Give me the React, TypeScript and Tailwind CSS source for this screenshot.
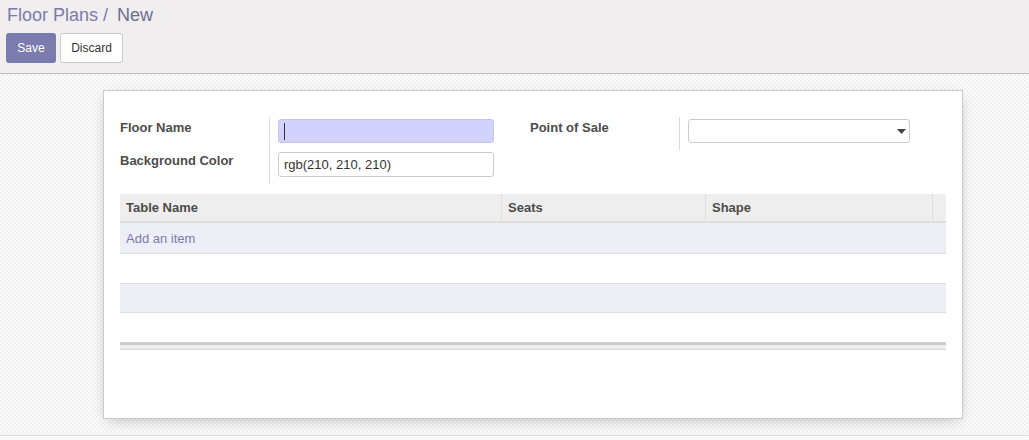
import React from 'react';

const font = { fontFamily: '"Liberation Sans", Arial, sans-serif' };

function FieldRow({ label, children, first }: { label: string; children: React.ReactNode; first?: boolean }) {
    return (
        <div className={`flex ${first ? 'h-[33px]' : 'h-[34px]'}`}>
            <div className="w-[149px] shrink-0 pt-[1px] text-[13px] font-bold text-[#4c4c4c]">{label}</div>
            <div className="flex-1 border-l border-[#dcdcdc] pl-[8px] pt-[2px]">{children}</div>
        </div>
    );
}

export default function App() {
    return (
        <div className="w-[1029px] h-[440px] flex flex-col bg-white overflow-hidden" style={font}>
            {/* control panel */}
            <div className="h-[74px] shrink-0 bg-[#f0eeee] border-b border-[#bcbcbc] px-[7px] pt-[4px]">
                <div className="text-[18px] leading-[22px] text-[#7c7bad]">
                    Floor Plans <span>/</span>
                    <span className="ml-[9px] text-[#6d6f8f]">New</span>
                </div>
                <div className="flex gap-[4px] mt-[7px] -ml-px">
                    <button className="h-[30px] w-[50px] rounded-[3px] bg-[#7c7bad] text-white text-[12px]">Save</button>
                    <button className="h-[30px] w-[63px] rounded-[3px] bg-white border border-[#cccccc] text-[#333] text-[12px]">Discard</button>
                </div>
            </div>

            {/* sheet background */}
            <div className="h-[362px] shrink-0 bg-[#f8f8f8] bg-[image:repeating-conic-gradient(#f1f1f1_0_25%,#fcfcfc_0_50%)] bg-[length:4px_4px] pt-[16px] border-b border-[#dddddd]">
                <div className="ml-[103px] w-[860px] h-[329px] bg-white border border-[#c9c9d2] shadow-[0_4px_14px_-4px_rgba(0,0,0,0.25)] px-[16px] pt-[26px]">
                    <div className="flex">
                        <div className="w-[410px]">
                            <FieldRow label="Floor Name" first>
                                <div className="h-[24px] w-[216px] rounded-[3px] bg-[#d2d2ff] border border-[#c6c6e8] flex items-center pl-[5px]">
                                    <span className="w-px h-[17px] bg-[#333]" />
                                </div>
                            </FieldRow>
                            <FieldRow label="Background Color">
                                <div className="h-[25px] w-[216px] rounded-[3px] bg-white border border-[#cccccc] flex items-center pl-[5px] text-[13px] text-[#333]">
                                    rgb(210, 210, 210)
                                </div>
                            </FieldRow>
                        </div>
                        <div className="w-[416px]">
                            <FieldRow label="Point of Sale" first>
                                <div className="h-[24px] w-[222px] rounded-[3px] bg-white border border-[#cccccc] flex items-center justify-end pr-[3px]">
                                    <svg width="9" height="5" viewBox="0 0 9 5"><path d="M0 0h9L4.5 5z" fill="#444" /></svg>
                                </div>
                            </FieldRow>
                        </div>
                    </div>

                    {/* one2many list */}
                    <div className="mt-[10px] text-[13px]">
                        <div className="flex h-[29px] bg-[#eeeeee] border-b-2 border-[#dddddd] font-bold text-[#4c4c4c]">
                            <div className="w-[381px] pl-[6px] pt-[1px] flex items-center">Table Name</div>
                            <div className="w-[204px] pl-[6px] pt-[1px] flex items-center border-l border-[#dedede]">Seats</div>
                            <div className="w-[227px] pl-[6px] pt-[1px] flex items-center border-l border-[#dedede]">Shape</div>
                            <div className="flex-1 border-l border-[#dedede]" />
                        </div>
                        <div className="h-[31px] bg-[#eeeef6] border-b border-[#dddddd] flex items-center pl-[6px] pt-[1px] text-[#7c7bad]">Add an item</div>
                        <div className="h-[30px] bg-white border-b border-[#dddddd]" />
                        <div className="h-[29px] bg-[#eeeef6] border-b border-[#dddddd]" />
                        <div className="h-[29px] bg-white" />
                        <div className="h-[8px] bg-[#eeeeee] border-t-[3px] border-b border-t-[#cccccc] border-b-[#d8d8d8]" />
                    </div>
                </div>
            </div>
            <div className="flex-1 bg-[#fafafa]" />
        </div>
    );
}
